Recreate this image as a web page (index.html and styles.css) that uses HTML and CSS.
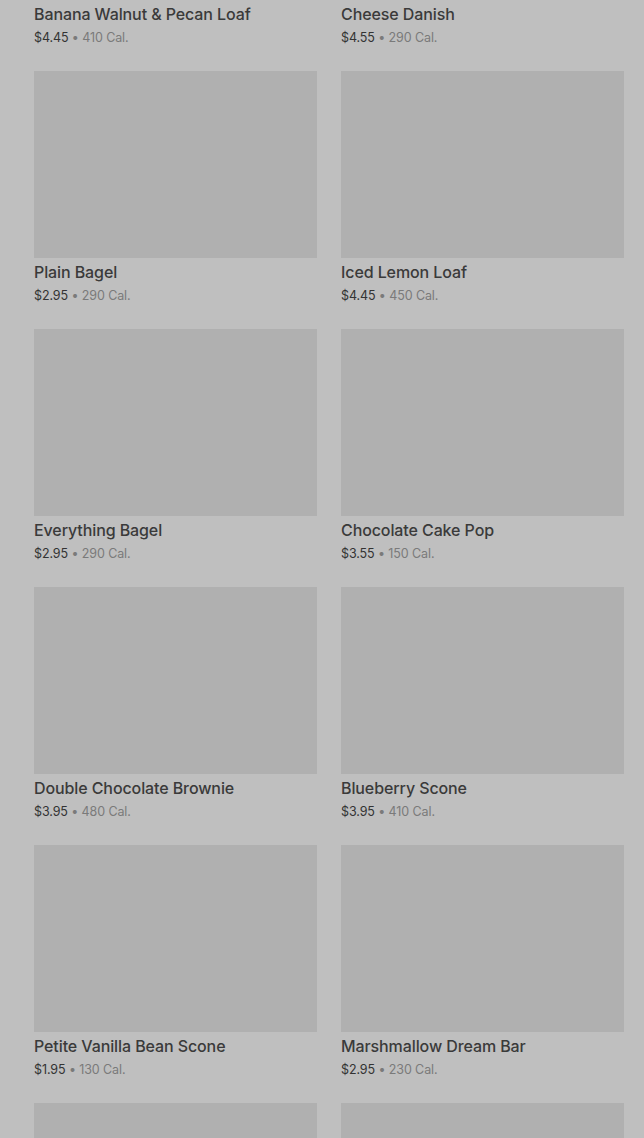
FILE: index.html
```html
<!DOCTYPE html>
<html lang="en">
<head>
    <meta charset="UTF-8">
    <meta name="viewport" content="width=device-width, initial-scale=1.0">
    <title>Bakery</title>
    <link rel="stylesheet" href="styles.css">
</head>
<body>
    <!-- 菜单列表，页面已向下滚动 -->
    <div class="menu-grid">
        <div class="item">
            <div class="item-img"></div>
            <div class="item-name">Banana Walnut &amp; Pecan Loaf</div>
            <div class="item-meta"><span class="price">$4.45</span> • 410 Cal.</div>
        </div>
        <div class="item">
            <div class="item-img"></div>
            <div class="item-name">Cheese Danish</div>
            <div class="item-meta"><span class="price">$4.55</span> • 290 Cal.</div>
        </div>
        <div class="item">
            <div class="item-img"></div>
            <div class="item-name">Plain Bagel</div>
            <div class="item-meta"><span class="price">$2.95</span> • 290 Cal.</div>
        </div>
        <div class="item">
            <div class="item-img"></div>
            <div class="item-name">Iced Lemon Loaf</div>
            <div class="item-meta"><span class="price">$4.45</span> • 450 Cal.</div>
        </div>
        <div class="item">
            <div class="item-img"></div>
            <div class="item-name">Everything Bagel</div>
            <div class="item-meta"><span class="price">$2.95</span> • 290 Cal.</div>
        </div>
        <div class="item">
            <div class="item-img"></div>
            <div class="item-name">Chocolate Cake Pop</div>
            <div class="item-meta"><span class="price">$3.55</span> • 150 Cal.</div>
        </div>
        <div class="item">
            <div class="item-img"></div>
            <div class="item-name">Double Chocolate Brownie</div>
            <div class="item-meta"><span class="price">$3.95</span> • 480 Cal.</div>
        </div>
        <div class="item">
            <div class="item-img"></div>
            <div class="item-name">Blueberry Scone</div>
            <div class="item-meta"><span class="price">$3.95</span> • 410 Cal.</div>
        </div>
        <div class="item">
            <div class="item-img"></div>
            <div class="item-name">Petite Vanilla Bean Scone</div>
            <div class="item-meta"><span class="price">$1.95</span> • 130 Cal.</div>
        </div>
        <div class="item">
            <div class="item-img"></div>
            <div class="item-name">Marshmallow Dream Bar</div>
            <div class="item-meta"><span class="price">$2.95</span> • 230 Cal.</div>
        </div>
        <!-- 下一行只露出图片顶部 -->
        <div class="item">
            <div class="item-img"></div>
        </div>
        <div class="item">
            <div class="item-img"></div>
        </div>
    </div>
</body>
</html>
```

FILE: styles.css
```css
html, body {
    height: 100%;
    overflow: hidden;
}

body {
    font-family: Inter, Roboto, "Liberation Sans", sans-serif;
    background-color: #bfbfbf;  /* 遮罩后的背景 */
    margin: 0;
    padding: 0;
}

.menu-grid {
    display: grid;
    grid-template-columns: 283px 283px;
    column-gap: 24px;
    row-gap: 24px;
    padding: 0 20px 0 34px;
    margin-top: -187px;  /* 滚动位置 */
}

.item-img {
    height: 187px;
    background-color: #b0b0b0;
}

.item-name {
    margin-top: 4px;
    font-size: 16px;
    line-height: 20px;
    font-weight: 500;
    color: #3a3a3a;
    letter-spacing: -0.1px;
}

.item-meta {
    margin-top: 5px;
    font-size: 12.5px;
    line-height: 18px;
    color: #7a7a7a;
    letter-spacing: -0.1px;
}

.item-meta .price {
    color: #333333;
}
```
